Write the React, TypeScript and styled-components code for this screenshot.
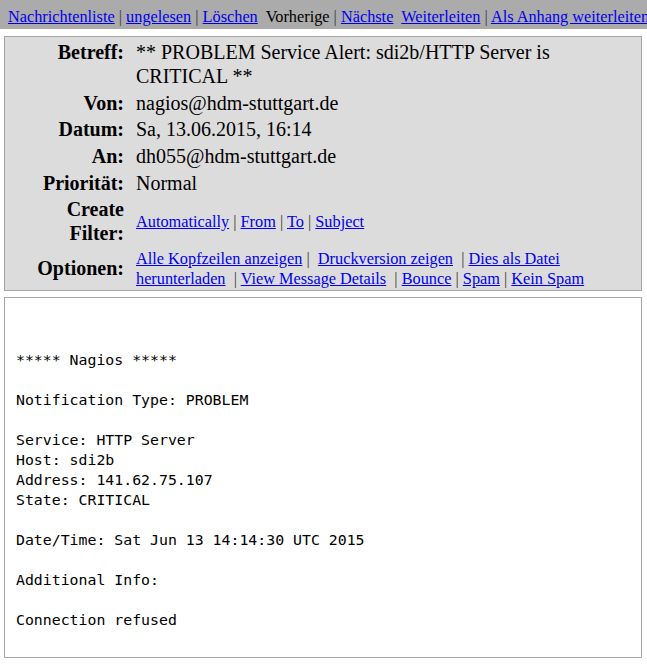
import * as React from 'react';
import styled, {createGlobalStyle} from 'styled-components';

const GlobalStyle = createGlobalStyle`
    html, body {
        margin: 0;
        padding: 0;
        background: #ffffff;
        font-family: "Liberation Serif", "Times New Roman", serif;
        color: #000000;
    }
`;

const Page = styled.div`
    width: 647px;
    overflow: hidden;
`;

const TopBar = styled.div`
    height: 29px;
    box-sizing: border-box;
    padding: 8px 0 0 8px;
    background-color: #ababab;
    font-size: 16.3px;
    line-height: 18px;
    white-space: nowrap;
    overflow: hidden;
`;

const Link = styled.a`
    color: #0000ee;
    text-decoration: underline;
    cursor: pointer;
`;

const Sep = styled.span`
    color: #3a3a3a;
`;

const Plain = styled.span`
    color: #000000;
`;

const Content = styled.div`
    padding: 7px 0 0 4px;
    display: flex;
    flex-direction: column;
    gap: 6px;
`;

const HeaderBox = styled.div`
    width: 638px;
    box-sizing: border-box;
    background-color: #dcdcdc;
    border: 1px solid #a6a6a6;
    padding: 3px 5px 1px 0;
    display: flex;
    flex-direction: column;
    gap: 2.67px;
`;

const Row = styled.div<{$top?: boolean}>`
    display: grid;
    grid-template-columns: 119px 1fr;
    column-gap: 12px;
    align-items: ${({$top}) => ($top ? 'start' : 'center')};
`;

const Label = styled.div`
    text-align: right;
    font-weight: bold;
    font-size: 20px;
    line-height: 24px;
`;

const Value = styled.div`
    font-size: 20px;
    line-height: 24px;
`;

const LinkValue = styled.div`
    font-size: 16.3px;
    line-height: 20px;
    padding-top: 1px;
`;

const BodyBox = styled.div`
    width: 638px;
    height: 361px;
    box-sizing: border-box;
    background-color: #ffffff;
    border: 1px solid #a6a6a6;
`;

const Pre = styled.pre`
    margin: 0;
    padding: 52px 11px 0 11px;
    font-family: "DejaVu Sans Mono", monospace;
    font-size: 14.85px;
    line-height: 20px;
    color: #000000;
    white-space: pre;
`;

const bodyText = [
    '***** Nagios *****',
    '',
    'Notification Type: PROBLEM',
    '',
    'Service: HTTP Server',
    'Host: sdi2b',
    'Address: 141.62.75.107',
    'State: CRITICAL',
    '',
    'Date/Time: Sat Jun 13 14:14:30 UTC 2015',
    '',
    'Additional Info:',
    '',
    'Connection refused',
].join('\n');

const App = () => {
    return (
        <Page>
            <GlobalStyle />
            <TopBar>
                <Link>Nachrichtenliste</Link>
                <Sep> | </Sep>
                <Link>ungelesen</Link>
                <Sep> | </Sep>
                <Link>Löschen</Link>
                {'\u00a0 '}
                <Plain>Vorherige</Plain>
                <Sep> | </Sep>
                <Link>Nächste</Link>
                {'\u00a0 '}
                <Link>Weiterleiten</Link>
                <Sep> | </Sep>
                <Link>Als Anhang weiterleiten</Link>
            </TopBar>
            <Content>
                <HeaderBox>
                    <Row $top>
                        <Label>Betreff:</Label>
                        <Value>** PROBLEM Service Alert: sdi2b/HTTP Server is CRITICAL **</Value>
                    </Row>
                    <Row>
                        <Label>Von:</Label>
                        <Value>nagios@hdm-stuttgart.de</Value>
                    </Row>
                    <Row>
                        <Label>Datum:</Label>
                        <Value>Sa, 13.06.2015, 16:14</Value>
                    </Row>
                    <Row>
                        <Label>An:</Label>
                        <Value>dh055@hdm-stuttgart.de</Value>
                    </Row>
                    <Row>
                        <Label>Priorität:</Label>
                        <Value>Normal</Value>
                    </Row>
                    <Row>
                        <Label>
                            Create
                            <br />
                            Filter:
                        </Label>
                        <LinkValue>
                            <Link>Automatically</Link>
                            <Sep> | </Sep>
                            <Link>From</Link>
                            <Sep> | </Sep>
                            <Link>To</Link>
                            <Sep> | </Sep>
                            <Link>Subject</Link>
                        </LinkValue>
                    </Row>
                    <Row>
                        <Label>Optionen:</Label>
                        <LinkValue>
                            <Link>Alle Kopfzeilen anzeigen</Link>
                            <Sep> |{'\u00a0 '}</Sep>
                            <Link>Druckversion zeigen</Link>
                            <Sep>{'\u00a0 '}| </Sep>
                            <Link>Dies als Datei herunterladen</Link>
                            <Sep>{'\u00a0 '}| </Sep>
                            <Link>View Message Details</Link>
                            <Sep>{'\u00a0 '}| </Sep>
                            <Link>Bounce</Link>
                            <Sep> | </Sep>
                            <Link>Spam</Link>
                            <Sep> | </Sep>
                            <Link>Kein Spam</Link>
                        </LinkValue>
                    </Row>
                </HeaderBox>
                <BodyBox>
                    <Pre>{bodyText}</Pre>
                </BodyBox>
            </Content>
        </Page>
    );
};

export default App;
